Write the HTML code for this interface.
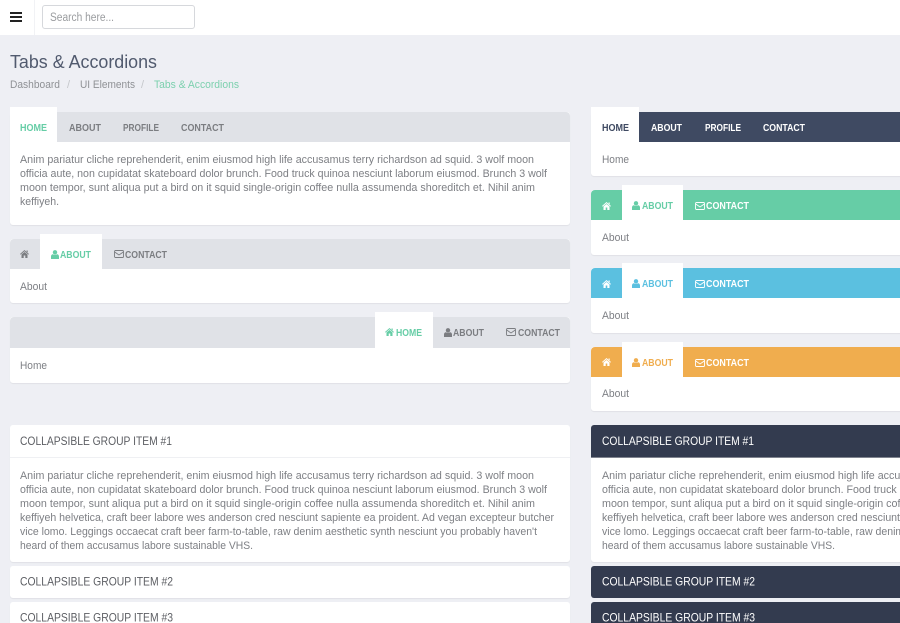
<!DOCTYPE html>
<html lang="en"><head><meta charset="utf-8"><title>Tabs &amp; Accordions</title>
<style>
html,body{margin:0;padding:0;width:900px;height:623px;overflow:hidden;background:#eeeff4}
#w{position:relative;width:900px;height:623px;overflow:hidden;background:#eeeff4}
.b{position:absolute}
.p{background:#fff;border-radius:3px;box-shadow:0 1px 1px rgba(0,0,0,.06)}
.h{border-radius:4px 4px 0 0}
svg.o{position:absolute;left:0;top:0}
text{font-family:"Liberation Sans",sans-serif}
.t{font-size:11px;fill:#7d7f84}
.tb{font-size:10px;font-weight:bold;fill:#7b7d81}
.g{fill:#66cda6}.w{fill:#fff}
.ac{font-size:12px;fill:#5c5e63}
.acw{font-size:12px;fill:#fff}
</style></head><body><div id="w">
<div class="b" style="left:0;top:0;width:900px;height:35px;background:#fff"></div>
<div class="b" style="left:34px;top:0;width:1px;height:35px;background:#f1f2f5"></div>
<div class="b" style="left:42px;top:5px;width:151px;height:22px;background:#fff;border:1px solid #d6d8dc;border-radius:3px"></div>

<div class="b p" style="left:10px;top:112px;width:560px;height:113px"></div>
<div class="b h" style="left:10px;top:112px;width:560px;height:30px;background:#e0e2e7"></div>
<div class="b" style="left:10px;top:107px;width:47px;height:35px;background:#fff"></div>

<div class="b p" style="left:10px;top:239px;width:560px;height:64px"></div>
<div class="b h" style="left:10px;top:239px;width:560px;height:30px;background:#e0e2e7"></div>
<div class="b" style="left:40px;top:234px;width:62px;height:35px;background:#fff"></div>

<div class="b p" style="left:10px;top:317px;width:560px;height:66px"></div>
<div class="b h" style="left:10px;top:317px;width:560px;height:31px;background:#e0e2e7"></div>
<div class="b" style="left:375px;top:312px;width:58px;height:36px;background:#fff"></div>

<div class="b p" style="left:591px;top:112px;width:320px;height:64px"></div>
<div class="b h" style="left:591px;top:112px;width:320px;height:30px;background:#3f4a62"></div>
<div class="b" style="left:591px;top:107px;width:48px;height:35px;background:#fff"></div>

<div class="b p" style="left:591px;top:190px;width:320px;height:65px"></div>
<div class="b h" style="left:591px;top:190px;width:320px;height:30px;background:#66cda6"></div>
<div class="b" style="left:622px;top:185px;width:61px;height:35px;background:#fff"></div>

<div class="b p" style="left:591px;top:268px;width:320px;height:65px"></div>
<div class="b h" style="left:591px;top:268px;width:320px;height:30px;background:#5bc0e0"></div>
<div class="b" style="left:622px;top:263px;width:61px;height:35px;background:#fff"></div>

<div class="b p" style="left:591px;top:347px;width:320px;height:64px"></div>
<div class="b h" style="left:591px;top:347px;width:320px;height:30px;background:#f0ad4e"></div>
<div class="b" style="left:622px;top:342px;width:61px;height:35px;background:#fff"></div>

<div class="b p" style="left:10px;top:425px;width:560px;height:137px"></div>
<div class="b" style="left:10px;top:457px;width:560px;height:1px;background:#eff0f3"></div>
<div class="b p" style="left:10px;top:566px;width:560px;height:32px"></div>
<div class="b p" style="left:10px;top:602px;width:560px;height:32px"></div>

<div class="b p" style="left:591px;top:425px;width:320px;height:137px"></div>
<div class="b" style="left:591px;top:425px;width:320px;height:32px;background:#333b4f;border-radius:3px 3px 0 0;border-bottom:1px solid #80848f"></div>
<div class="b" style="left:591px;top:566px;width:320px;height:32px;background:#333b4f;border-radius:3px"></div>
<div class="b" style="left:591px;top:602px;width:320px;height:32px;background:#333b4f;border-radius:3px"></div>

<svg class="o" width="900" height="623" viewBox="0 0 900 623" xmlns="http://www.w3.org/2000/svg">
<defs>
<symbol id="home" viewBox="0 0 9 8" width="9" height="8"><path fill="currentColor" d="M4.5 0L9 4l-.7.6-3.8-3.3L.7 4.6 0 4zM1.5 4.5l3-2.5 3 2.5V8H5.3V5.5H3.7V8H1.5zM6.5.5h1.2v2l-1.2-1z"/></symbol>
<symbol id="user" viewBox="0 0 8 9" width="8" height="9"><circle fill="currentColor" cx="4" cy="2.3" r="2.2"/><path fill="currentColor" d="M0 9V6.5C0 5 1.2 4.3 2 4.3c.8.7 3.2.7 4 0C6.800 4.300 8 5 8 6.500V9z"/></symbol>
<symbol id="env" viewBox="0 0 10 8" width="10" height="8"><rect x=".5" y=".5" width="9" height="7" rx="1" fill="none" stroke="currentColor" stroke-width=".9"/><path fill="none" stroke="currentColor" stroke-width=".9" d="M.7 2l4.300 3L9.300 2"/></symbol>
</defs>

<rect x="10" y="12" width="12" height="2" fill="#222"/><rect x="10" y="16" width="12" height="2" fill="#222"/><rect x="10" y="20" width="12" height="2" fill="#222"/>
<text x="50" y="21" font-size="11.500" fill="#9a9c9f" textLength="64" lengthAdjust="spacingAndGlyphs">Search here...</text>

<text x="10" y="68" font-size="18.500" fill="#515a6e" textLength="147" lengthAdjust="spacingAndGlyphs">Tabs &amp; Accordions</text>
<text x="10" y="88" font-size="11" fill="#8f9195" textLength="50" lengthAdjust="spacingAndGlyphs">Dashboard</text>
<text x="67" y="88" font-size="11" fill="#c5c7cb">/</text>
<text x="80" y="88" font-size="11" fill="#8f9195" textLength="55" lengthAdjust="spacingAndGlyphs">UI Elements</text>
<text x="141" y="88" font-size="11" fill="#c5c7cb">/</text>
<text x="154" y="88" font-size="11" fill="#7cd0ae" textLength="85" lengthAdjust="spacingAndGlyphs">Tabs &amp; Accordions</text>

<!-- panel 1 -->
<text class="tb g" x="20" y="131" textLength="27" lengthAdjust="spacingAndGlyphs">HOME</text>
<text class="tb" x="69" y="131" textLength="32" lengthAdjust="spacingAndGlyphs">ABOUT</text>
<text class="tb" x="123" y="131" textLength="36" lengthAdjust="spacingAndGlyphs">PROFILE</text>
<text class="tb" x="181" y="131" textLength="43" lengthAdjust="spacingAndGlyphs">CONTACT</text>
<text class="t" x="20" y="163" textLength="514" lengthAdjust="spacingAndGlyphs">Anim pariatur cliche reprehenderit, enim eiusmod high life accusamus terry richardson ad squid. 3 wolf moon</text>
<text class="t" x="20" y="177" textLength="527" lengthAdjust="spacingAndGlyphs">officia aute, non cupidatat skateboard dolor brunch. Food truck quinoa nesciunt laborum eiusmod. Brunch 3 wolf</text>
<text class="t" x="20" y="191" textLength="515" lengthAdjust="spacingAndGlyphs">moon tempor, sunt aliqua put a bird on it squid single-origin coffee nulla assumenda shoreditch et. Nihil anim</text>
<text class="t" x="20" y="205" textLength="39" lengthAdjust="spacingAndGlyphs">keffiyeh.</text>

<!-- panel 2 -->
<use href="#home" x="20" y="250" style="color:#7b7d81"/>
<use href="#user" x="51" y="250" style="color:#66cda6"/>
<text class="tb g" x="60" y="258" textLength="31" lengthAdjust="spacingAndGlyphs">ABOUT</text>
<use href="#env" x="114" y="250" style="color:#7b7d81"/>
<text class="tb" x="125" y="258" textLength="42" lengthAdjust="spacingAndGlyphs">CONTACT</text>
<text class="t" x="20" y="290" textLength="27" lengthAdjust="spacingAndGlyphs">About</text>

<!-- panel 3 -->
<use href="#home" x="385" y="328" style="color:#66cda6"/>
<text class="tb g" x="396" y="336" textLength="26" lengthAdjust="spacingAndGlyphs">HOME</text>
<use href="#user" x="444" y="328" style="color:#7b7d81"/>
<text class="tb" x="453" y="336" textLength="31" lengthAdjust="spacingAndGlyphs">ABOUT</text>
<use href="#env" x="506" y="328" style="color:#7b7d81"/>
<text class="tb" x="518" y="336" textLength="42" lengthAdjust="spacingAndGlyphs">CONTACT</text>
<text class="t" x="20" y="369" textLength="27" lengthAdjust="spacingAndGlyphs">Home</text>

<!-- right a -->
<text class="tb" style="fill:#3f4a62" x="602" y="131" textLength="27" lengthAdjust="spacingAndGlyphs">HOME</text>
<text class="tb w" x="651" y="131" textLength="31" lengthAdjust="spacingAndGlyphs">ABOUT</text>
<text class="tb w" x="705" y="131" textLength="36" lengthAdjust="spacingAndGlyphs">PROFILE</text>
<text class="tb w" x="763" y="131" textLength="42" lengthAdjust="spacingAndGlyphs">CONTACT</text>
<text class="t" x="602" y="163" textLength="27" lengthAdjust="spacingAndGlyphs">Home</text>

<!-- right b -->
<use href="#home" x="602" y="202" style="color:#fff"/>
<use href="#user" x="632" y="201" style="color:#66cda6"/>
<text class="tb" style="fill:#66cda6" x="642" y="209" textLength="31" lengthAdjust="spacingAndGlyphs">ABOUT</text>
<use href="#env" x="695" y="202" style="color:#fff"/>
<text class="tb w" x="706" y="209" textLength="43" lengthAdjust="spacingAndGlyphs">CONTACT</text>
<text class="t" x="602" y="241" textLength="27" lengthAdjust="spacingAndGlyphs">About</text>

<!-- right c -->
<use href="#home" x="602" y="280" style="color:#fff"/>
<use href="#user" x="632" y="279" style="color:#5bc0e0"/>
<text class="tb" style="fill:#5bc0e0" x="642" y="287" textLength="31" lengthAdjust="spacingAndGlyphs">ABOUT</text>
<use href="#env" x="695" y="280" style="color:#fff"/>
<text class="tb w" x="706" y="287" textLength="43" lengthAdjust="spacingAndGlyphs">CONTACT</text>
<text class="t" x="602" y="319" textLength="27" lengthAdjust="spacingAndGlyphs">About</text>

<!-- right d -->
<use href="#home" x="602" y="358" style="color:#fff"/>
<use href="#user" x="632" y="358" style="color:#f0ad4e"/>
<text class="tb" style="fill:#f0ad4e" x="642" y="366" textLength="31" lengthAdjust="spacingAndGlyphs">ABOUT</text>
<use href="#env" x="695" y="359" style="color:#fff"/>
<text class="tb w" x="706" y="366" textLength="43" lengthAdjust="spacingAndGlyphs">CONTACT</text>
<text class="t" x="602" y="397" textLength="27" lengthAdjust="spacingAndGlyphs">About</text>

<!-- left accordion -->
<text class="ac" x="20" y="445" textLength="152" lengthAdjust="spacingAndGlyphs">COLLAPSIBLE GROUP ITEM #1</text>
<text class="t" x="20" y="479" textLength="514" lengthAdjust="spacingAndGlyphs">Anim pariatur cliche reprehenderit, enim eiusmod high life accusamus terry richardson ad squid. 3 wolf moon</text>
<text class="t" x="20" y="493" textLength="527" lengthAdjust="spacingAndGlyphs">officia aute, non cupidatat skateboard dolor brunch. Food truck quinoa nesciunt laborum eiusmod. Brunch 3 wolf</text>
<text class="t" x="20" y="507" textLength="515" lengthAdjust="spacingAndGlyphs">moon tempor, sunt aliqua put a bird on it squid single-origin coffee nulla assumenda shoreditch et. Nihil anim</text>
<text class="t" x="20" y="521" textLength="534" lengthAdjust="spacingAndGlyphs">keffiyeh helvetica, craft beer labore wes anderson cred nesciunt sapiente ea proident. Ad vegan excepteur butcher</text>
<text class="t" x="20" y="535" textLength="517" lengthAdjust="spacingAndGlyphs">vice lomo. Leggings occaecat craft beer farm-to-table, raw denim aesthetic synth nesciunt you probably haven't</text>
<text class="t" x="20" y="549" textLength="233" lengthAdjust="spacingAndGlyphs">heard of them accusamus labore sustainable VHS.</text>
<text class="ac" x="20" y="585.500" textLength="153" lengthAdjust="spacingAndGlyphs">COLLAPSIBLE GROUP ITEM #2</text>
<text class="ac" x="20" y="621.500" textLength="153" lengthAdjust="spacingAndGlyphs">COLLAPSIBLE GROUP ITEM #3</text>

<!-- right accordion -->
<text class="acw" x="602" y="445" textLength="152" lengthAdjust="spacingAndGlyphs">COLLAPSIBLE GROUP ITEM #1</text>
<text class="t" x="602" y="479" textLength="514" lengthAdjust="spacingAndGlyphs">Anim pariatur cliche reprehenderit, enim eiusmod high life accusamus terry richardson ad squid. 3 wolf moon</text>
<text class="t" x="602" y="493" textLength="527" lengthAdjust="spacingAndGlyphs">officia aute, non cupidatat skateboard dolor brunch. Food truck quinoa nesciunt laborum eiusmod. Brunch 3 wolf</text>
<text class="t" x="602" y="507" textLength="515" lengthAdjust="spacingAndGlyphs">moon tempor, sunt aliqua put a bird on it squid single-origin coffee nulla assumenda shoreditch et. Nihil anim</text>
<text class="t" x="602" y="521" textLength="534" lengthAdjust="spacingAndGlyphs">keffiyeh helvetica, craft beer labore wes anderson cred nesciunt sapiente ea proident. Ad vegan excepteur butcher</text>
<text class="t" x="602" y="535" textLength="517" lengthAdjust="spacingAndGlyphs">vice lomo. Leggings occaecat craft beer farm-to-table, raw denim aesthetic synth nesciunt you probably haven't</text>
<text class="t" x="602" y="549" textLength="233" lengthAdjust="spacingAndGlyphs">heard of them accusamus labore sustainable VHS.</text>
<text class="acw" x="602" y="585.500" textLength="153" lengthAdjust="spacingAndGlyphs">COLLAPSIBLE GROUP ITEM #2</text>
<text class="acw" x="602" y="621.500" textLength="153" lengthAdjust="spacingAndGlyphs">COLLAPSIBLE GROUP ITEM #3</text>
</svg>
</div></body></html>
